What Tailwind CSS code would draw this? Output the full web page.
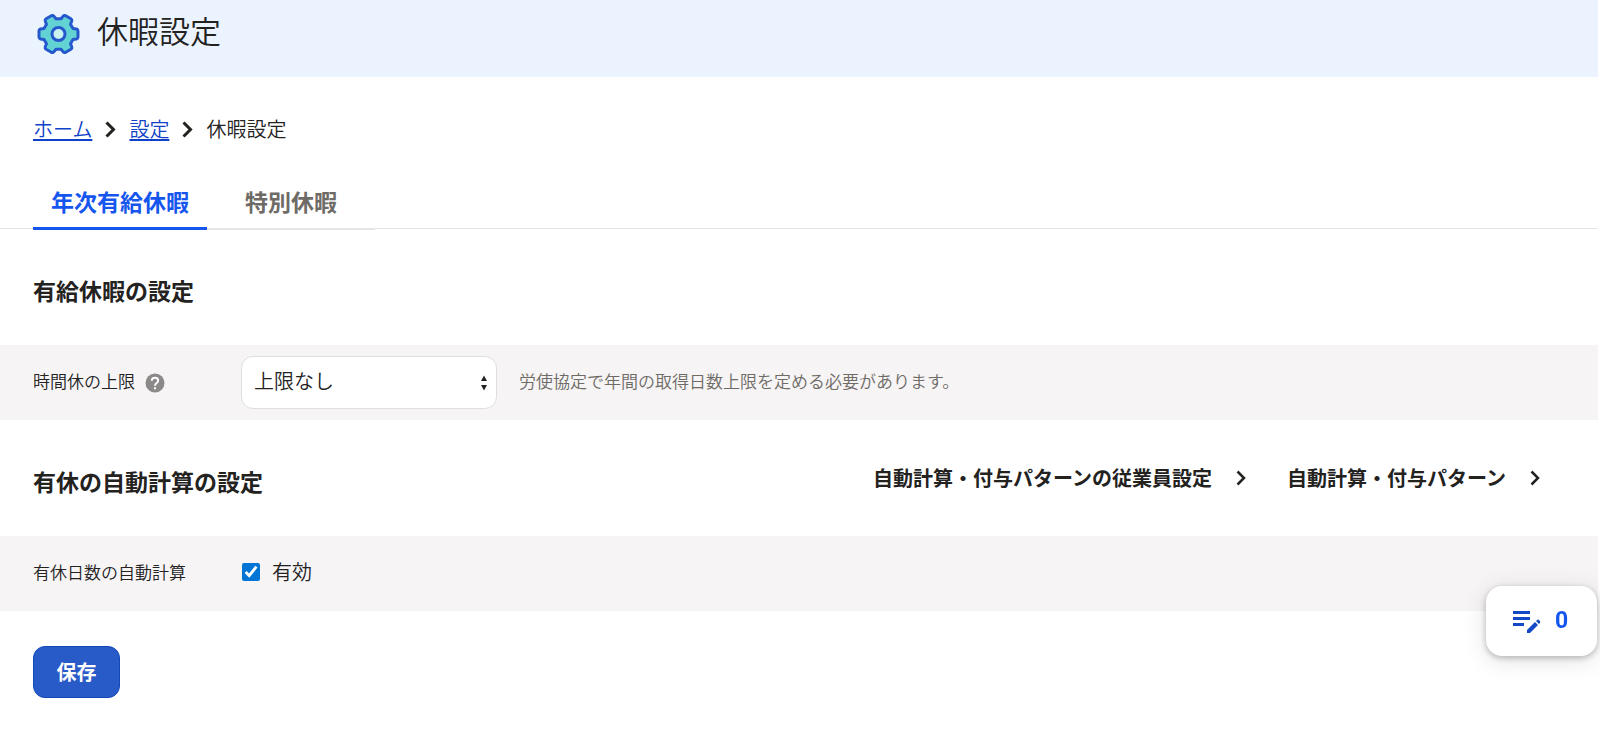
<!DOCTYPE html>
<html lang="ja">
<head>
  <meta charset="UTF-8" />
  <meta name="viewport" content="width=device-width, initial-scale=1.0" />
  <title>休暇設定</title>
  <script src="https://cdn.jsdelivr.net/npm/@tailwindcss/browser@4"></script>
  <style>
    body {
      font-family: 'Noto Sans CJK JP', sans-serif;
    }
  </style>
</head>
<body class="bg-white text-[#23221e] text-[20px] leading-[30px] pr-[2px]">

  <!-- Cabecera -->
  <header class="bg-[#ebf3ff] h-[77px] flex items-start gap-4 pl-9 pt-3">
    <svg class="w-[45px] h-[45px]" viewBox="-22.5 -22 45 45" aria-hidden="true">
      <path d="M14.500 -5.500L18 -5Q19.500 -4.500 19.500 -3V3Q19.500 4.500 18 5L14.500 5.500L12 9.800L13.300 13Q13.700 14.400 12.400 15.300L7.200 18.300Q5.800 19 4.700 17.900L2.500 15.300H-2.500L-4.700 17.900Q-5.800 19 -7.200 18.300L-12.400 15.300Q-13.700 14.400 -13.300 13L-12 9.800L-14.500 5.500L-18 5Q-19.500 4.500 -19.500 3V-3Q-19.500 -4.500 -18 -5L-14.500 -5.500L-12 -9.800L-13.300 -13Q-13.700 -14.400 -12.400 -15.300L-7.200 -18.300Q-5.800 -19 -4.700 -17.900L-2.500 -15.300H2.500L4.700 -17.900Q5.800 -19 7.200 -18.300L12.400 -15.300Q13.700 -14.400 13.300 -13L12 -9.800Z" fill="#62d2d2" stroke="#2558cc" stroke-width="3" stroke-linejoin="round" />
      <circle r="6.500" fill="#c9f2f0" stroke="#2558cc" stroke-width="3" />
    </svg>
    <h1 class="text-[31px] leading-[36px] font-[350]">休暇設定</h1>
  </header>

  <!-- Migas de pan -->
  <nav class="flex items-center pl-[33px] pt-[37px] font-[350]" aria-label="パンくず">
    <a href="#" class="text-[#0f42c8] underline decoration-2 underline-offset-2">ホーム</a>
    <svg class="w-[11px] h-[17px] mx-[13px]" viewBox="0 0 11 17" fill="none" stroke="#23221e" stroke-width="3" aria-hidden="true"><path d="M1.500 1.500L8.500 8.500L1.500 15.500" /></svg>
    <a href="#" class="text-[#0f42c8] underline decoration-2 underline-offset-2">設定</a>
    <svg class="w-[11px] h-[17px] mx-[13px]" viewBox="0 0 11 17" fill="none" stroke="#23221e" stroke-width="3" aria-hidden="true"><path d="M1.500 1.500L8.500 8.500L1.500 15.500" /></svg>
    <span>休暇設定</span>
  </nav>

  <!-- Pestañas -->
  <div class="border-b border-[#e5e5e5] mt-[33px] pl-[33px] flex text-[23px] leading-[34px] font-bold" role="tablist">
    <button type="button" role="tab" aria-selected="true" class="w-[174px] h-[53px] -mb-[2px] pb-[2px] border-b-3 border-[#1556ee] text-[#1556ee]">年次有給休暇</button>
    <button type="button" role="tab" aria-selected="false" class="w-[168px] h-[53px] -mb-[2px] pb-[3px] border-b-2 border-[#e5e5e5] text-[#6e6b66]">特別休暇</button>
  </div>

  <main>
    <section>
      <h2 class="pl-[33px] h-[116px] flex items-center pt-[5px] text-[23px] font-bold">有給休暇の設定</h2>
      <div class="bg-[#f6f4f5] h-[75px] pl-[33px] flex items-center">
        <div class="w-[208px] flex items-center gap-[10px]">
          <label for="limit" class="text-[17px] font-[350] pb-[3px]">時間休の上限</label>
          <svg class="w-5 h-5" viewBox="0 0 20 20" role="img" aria-label="ヘルプ">
            <circle cx="10" cy="10" r="9.500" fill="#8c8989" />
            <path d="M6.800 7.800C6.800 5.800 8.200 4.700 10 4.700S13.200 5.900 13.200 7.700C13.200 10 10 10.200 10 12.700" fill="none" stroke="#fff" stroke-width="2" />
            <path d="M9 14.200H11V16.200H9Z" fill="#fff" />
          </svg>
        </div>
        <div class="relative">
          <select id="limit" class="appearance-none w-[256px] h-[53px] rounded-xl border border-[#dfdfdf] bg-white pl-3 pr-8 pb-[3px] font-[350]">
            <option>上限なし</option>
          </select>
          <svg class="absolute right-[9px] top-[19px] w-2 h-4 pointer-events-none" viewBox="0 0 8 16" fill="#23221e" aria-hidden="true"><path d="M4 .5L7 6H1ZM4 15.500L1 10H7Z" /></svg>
        </div>
        <p class="ml-[22px] text-[17px] font-[350] text-[#6e6b66] pb-[3px]">労使協定で年間の取得日数上限を定める必要があります。</p>
      </div>
    </section>

    <section>
      <div class="h-[116px] pl-[33px] pr-[58px] flex items-center justify-between">
        <h2 class="text-[23px] font-bold pt-[5px]">有休の自動計算の設定</h2>
        <div class="flex gap-[41px] font-bold">
          <a href="#" class="flex items-center gap-6">自動計算・付与パターンの従業員設定
            <svg class="w-[10px] h-4" viewBox="0 0 10 16" fill="none" stroke="#23221e" stroke-width="2.500" aria-hidden="true"><path d="M1.500 1.500L8 8L1.500 14.500" /></svg>
          </a>
          <a href="#" class="flex items-center gap-6">自動計算・付与パターン
            <svg class="w-[10px] h-4" viewBox="0 0 10 16" fill="none" stroke="#23221e" stroke-width="2.500" aria-hidden="true"><path d="M1.500 1.500L8 8L1.500 14.500" /></svg>
          </a>
        </div>
      </div>
      <div class="bg-[#f6f4f5] h-[75px] pl-[33px] pb-[3px] flex items-center font-[350]">
        <span class="w-[208px] text-[17px]">有休日数の自動計算</span>
        <input id="auto" type="checkbox" checked class="w-[18px] h-[18px] ml-px accent-[#0075d6]" />
        <label for="auto" class="ml-3">有効</label>
      </div>
    </section>

    <div class="pl-[33px] pt-[35px]">
      <button type="button" class="w-[87px] h-[52px] rounded-xl border border-[#1249b8] bg-[#285ac8] text-white font-bold">保存</button>
    </div>
  </main>

  <!-- Botón flotante -->
  <button type="button" class="fixed right-[3px] bottom-[79px] w-[111px] h-[70px] rounded-2xl bg-white shadow-[0_2px_6px_rgba(0,0,0,0.25),0_4px_24px_rgba(0,0,0,0.12)] flex items-center gap-[14px] pl-[27px] text-[#1556ee] text-[23px] font-bold">
    <svg class="w-[28px] h-[24px]" viewBox="0 0 28 24" fill="#1349c4" aria-hidden="true">
      <path d="M0 2H17V5H0ZM0 8H17V11H0ZM0 14H11V17H0Z" />
      <path d="M14 21L22 13L25 16L17 24H14ZM23 12L24.500 10.800Q25.200 10.300 26 11L27 12.200Q27.600 13 27 13.700L26 15Z" />
    </svg>
    <span class="font-['Roboto',sans-serif]">0</span>
  </button>

</body>
</html>
